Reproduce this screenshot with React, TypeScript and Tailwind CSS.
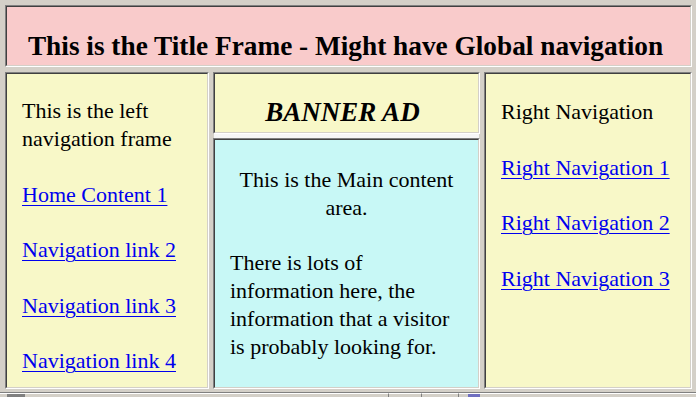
import React from "react";

// Classic frameset page: title frame on top, left nav / banner + main / right nav below

function Frame({ bg, className = "", children }: { bg: string; className?: string; children?: React.ReactNode }) {
  return (
    <div className={`flex border border-t-[#808080] border-l-[#808080] border-r-white border-b-white ${className}`}>
      <div className={`flex-1 overflow-hidden border border-t-[#404040] border-l-[#404040] border-r-[#d4d0c8] border-b-[#d4d0c8] ${bg}`}>
        {children}
      </div>
    </div>
  );
}

function NavLink({ children }: { children: React.ReactNode }) {
  return (
    <a href="#" className="text-[#0000ee] underline decoration-1 underline-offset-[3px]">
      {children}
    </a>
  );
}

export default function App() {
  return (
    <div className="w-[696px] h-[397px] overflow-hidden bg-[#d4d0c8] pt-[5px] pl-[5px] pr-[4px] flex flex-col text-black font-['Liberation_Serif','Times_New_Roman',serif]">
      <Frame bg="bg-[#f9cbcb]" className="h-[62px] shrink-0">
        <div className="pt-[24px] pr-[6px] text-center text-[27.3px] leading-[30px] font-bold whitespace-nowrap">
          This is the Title Frame - Might have Global navigation
        </div>
      </Frame>

      <div className="mt-[5px] h-[317px] shrink-0 flex gap-[4px]">
        <Frame bg="bg-[#f8f8c8]" className="w-[204px] shrink-0">
          <div className="pt-[23px] pl-[15px] text-[22px] leading-[28px] flex flex-col gap-[27.5px] whitespace-nowrap">
            <p>
              This is the left
              <br />
              navigation frame
            </p>
            <p><NavLink>Home Content 1</NavLink></p>
            <p><NavLink>Navigation link 2</NavLink></p>
            <p><NavLink>Navigation link 3</NavLink></p>
            <p><NavLink>Navigation link 4</NavLink></p>
          </div>
        </Frame>

        <div className="w-[267px] shrink-0 flex flex-col">
          <Frame bg="bg-[#f8f8c8]" className="h-[62px] shrink-0">
            <div className="pt-[23px] text-center text-[27px] leading-[30px] font-bold italic pr-[8px]">
              BANNER AD
            </div>
          </Frame>
          <div className="h-[4px] shrink-0 bg-[#f6f6f6] border-x border-x-[#d4d0c8]" />
          <Frame bg="bg-[#c8f8f6]" className="flex-1">
            <div className="pt-[26px] px-[15px] text-[22px] leading-[28px] flex flex-col gap-[27px] whitespace-nowrap">
              <p className="text-center">
                This is the Main content
                <br />
                area.
              </p>
              <p>
                There is lots of
                <br />
                information here, the
                <br />
                information that a visitor
                <br />
                is probably looking for.
              </p>
            </div>
          </Frame>
        </div>

        <Frame bg="bg-[#f8f8c8]" className="flex-1">
          <div className="pt-[24px] pl-[15px] text-[22px] leading-[28px] flex flex-col gap-[27.5px] whitespace-nowrap">
            <p>Right Navigation</p>
            <p><NavLink>Right Navigation 1</NavLink></p>
            <p><NavLink>Right Navigation 2</NavLink></p>
            <p><NavLink>Right Navigation 3</NavLink></p>
          </div>
        </Frame>
      </div>

      {/* status bar, mostly cut off at the bottom of the window */}
      <div className="mt-[3px] -ml-[5px] -mr-[4px] flex-1 border-t border-t-[#808080] flex">
        <div className="w-[388px] border-t border-t-white flex">
          <div className="ml-[7px] w-[18px] bg-[#808080]" />
        </div>
        <div className="w-[33px] border-l border-l-[#808080] border-t border-t-white" />
        <div className="w-[37px] border-l border-l-[#808080] border-t border-t-white" />
        <div className="flex-1 border-l border-l-[#808080] border-t border-t-white flex">
          <div className="ml-[9px] w-[12px] bg-[#7070c0]" />
        </div>
      </div>
    </div>
  );
}
